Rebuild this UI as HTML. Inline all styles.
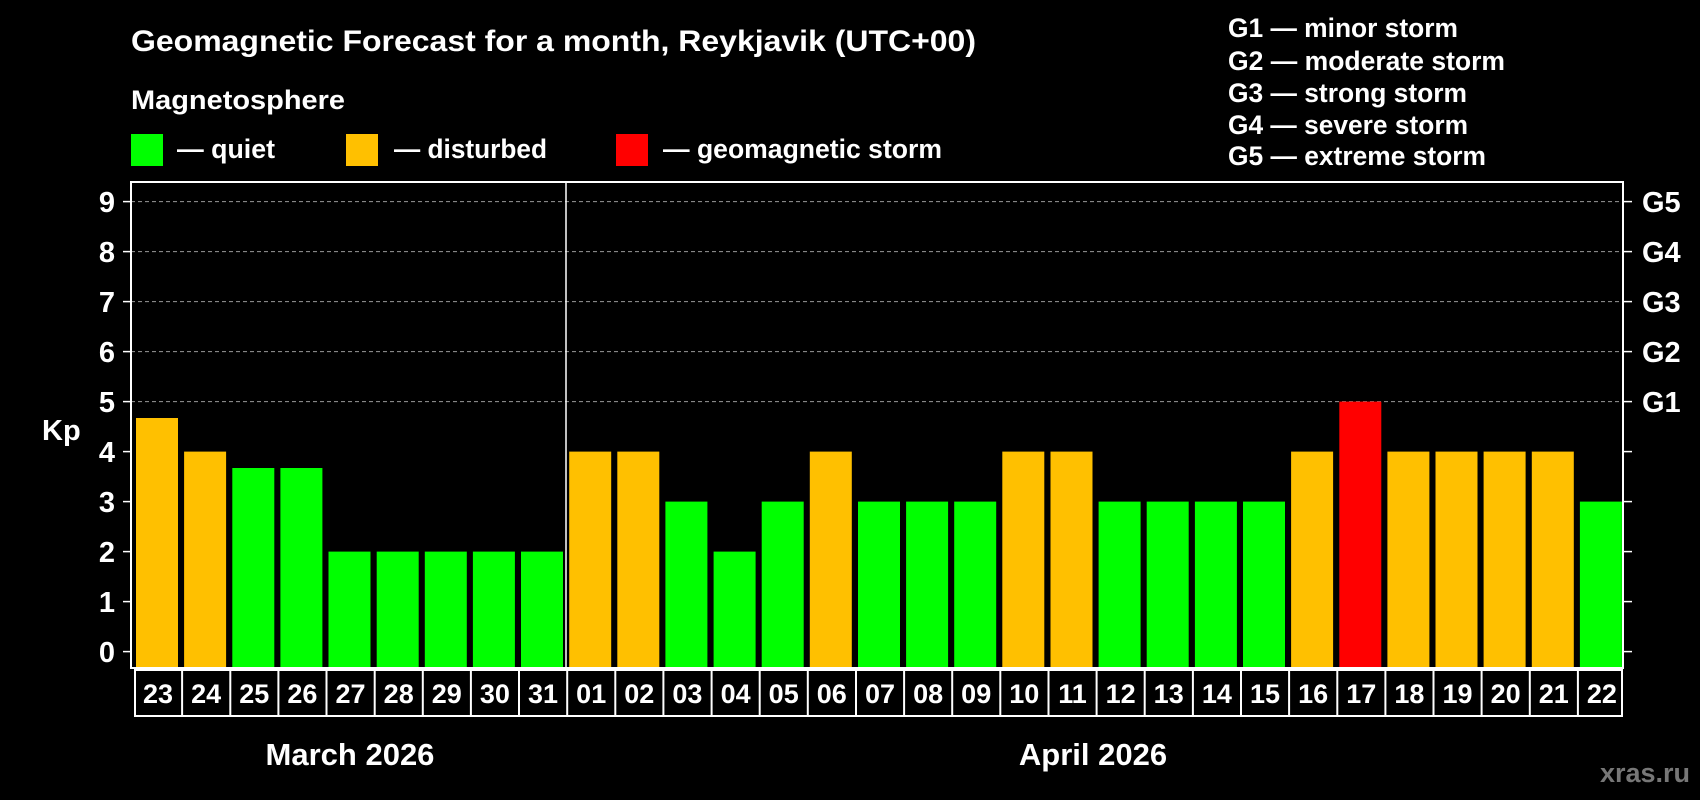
<!DOCTYPE html>
<html><head><meta charset="utf-8"><style>
html,body{margin:0;padding:0;background:#000;width:1700px;height:800px;overflow:hidden}
svg{display:block}
text{font-family:"Liberation Sans",Arial,sans-serif;font-weight:bold;fill:#fff}
</style></head><body>
<svg width="1700" height="800" viewBox="0 0 1700 800">
<rect width="1700" height="800" fill="#000"/>
<text x="131" y="51" font-size="30" textLength="845" lengthAdjust="spacingAndGlyphs">Geomagnetic Forecast for a month, Reykjavik (UTC+00)</text>
<text x="131" y="109" font-size="27" textLength="214" lengthAdjust="spacingAndGlyphs">Magnetosphere</text>
<rect x="131" y="134" width="32" height="32" fill="#00ff00"/>
<text x="177" y="158" font-size="27" textLength="98" lengthAdjust="spacingAndGlyphs">— quiet</text>
<rect x="346" y="134" width="32" height="32" fill="#ffc000"/>
<text x="394" y="158" font-size="27" textLength="153" lengthAdjust="spacingAndGlyphs">— disturbed</text>
<rect x="616" y="134" width="32" height="32" fill="#ff0000"/>
<text x="663" y="158" font-size="27" textLength="279" lengthAdjust="spacingAndGlyphs">— geomagnetic storm</text>
<g font-size="27">
<text x="1228" y="37" textLength="230" lengthAdjust="spacingAndGlyphs">G1 — minor storm</text>
<text x="1228" y="70" textLength="277" lengthAdjust="spacingAndGlyphs">G2 — moderate storm</text>
<text x="1228" y="102" textLength="239" lengthAdjust="spacingAndGlyphs">G3 — strong storm</text>
<text x="1228" y="134" textLength="240" lengthAdjust="spacingAndGlyphs">G4 — severe storm</text>
<text x="1228" y="165" textLength="258" lengthAdjust="spacingAndGlyphs">G5 — extreme storm</text>
</g>
<g stroke="#999" stroke-width="1" stroke-dasharray="4,3">
<line x1="131" y1="201.6" x2="1623" y2="201.6"/>
<line x1="131" y1="251.6" x2="1623" y2="251.6"/>
<line x1="131" y1="301.6" x2="1623" y2="301.6"/>
<line x1="131" y1="351.6" x2="1623" y2="351.6"/>
<line x1="131" y1="401.6" x2="1623" y2="401.6"/>
</g>
<g>
<rect x="136" y="418" width="42" height="250" fill="#ffc000"/>
<rect x="184.1" y="451.6" width="42" height="216.4" fill="#ffc000"/>
<rect x="232.3" y="468" width="42" height="200" fill="#00ff00"/>
<rect x="280.4" y="468" width="42" height="200" fill="#00ff00"/>
<rect x="328.5" y="551.6" width="42" height="116.4" fill="#00ff00"/>
<rect x="376.7" y="551.6" width="42" height="116.4" fill="#00ff00"/>
<rect x="424.8" y="551.6" width="42" height="116.4" fill="#00ff00"/>
<rect x="472.9" y="551.6" width="42" height="116.4" fill="#00ff00"/>
<rect x="521" y="551.6" width="42" height="116.4" fill="#00ff00"/>
<rect x="569.2" y="451.6" width="42" height="216.4" fill="#ffc000"/>
<rect x="617.3" y="451.6" width="42" height="216.4" fill="#ffc000"/>
<rect x="665.4" y="501.6" width="42" height="166.4" fill="#00ff00"/>
<rect x="713.6" y="551.6" width="42" height="116.4" fill="#00ff00"/>
<rect x="761.7" y="501.6" width="42" height="166.4" fill="#00ff00"/>
<rect x="809.8" y="451.6" width="42" height="216.4" fill="#ffc000"/>
<rect x="858" y="501.6" width="42" height="166.4" fill="#00ff00"/>
<rect x="906.1" y="501.6" width="42" height="166.4" fill="#00ff00"/>
<rect x="954.2" y="501.6" width="42" height="166.4" fill="#00ff00"/>
<rect x="1002.3" y="451.6" width="42" height="216.4" fill="#ffc000"/>
<rect x="1050.5" y="451.6" width="42" height="216.4" fill="#ffc000"/>
<rect x="1098.6" y="501.6" width="42" height="166.4" fill="#00ff00"/>
<rect x="1146.7" y="501.6" width="42" height="166.4" fill="#00ff00"/>
<rect x="1194.9" y="501.6" width="42" height="166.4" fill="#00ff00"/>
<rect x="1243" y="501.6" width="42" height="166.4" fill="#00ff00"/>
<rect x="1291.1" y="451.6" width="42" height="216.4" fill="#ffc000"/>
<rect x="1339.3" y="401.6" width="42" height="266.4" fill="#ff0000"/>
<rect x="1387.4" y="451.6" width="42" height="216.4" fill="#ffc000"/>
<rect x="1435.5" y="451.6" width="42" height="216.4" fill="#ffc000"/>
<rect x="1483.6" y="451.6" width="42" height="216.4" fill="#ffc000"/>
<rect x="1531.8" y="451.6" width="42" height="216.4" fill="#ffc000"/>
<rect x="1579.9" y="501.6" width="42" height="166.4" fill="#00ff00"/>
</g>
<rect x="131" y="182" width="1492" height="486" fill="none" stroke="#fff" stroke-width="2"/>
<line x1="566" y1="182" x2="566" y2="668" stroke="#fff" stroke-width="1.5"/>
<g stroke="#fff" stroke-width="1.5">
<line x1="123" y1="201.6" x2="131" y2="201.6"/><line x1="123" y1="251.6" x2="131" y2="251.6"/>
<line x1="123" y1="301.6" x2="131" y2="301.6"/><line x1="123" y1="351.6" x2="131" y2="351.6"/>
<line x1="123" y1="401.6" x2="131" y2="401.6"/><line x1="123" y1="451.6" x2="131" y2="451.6"/>
<line x1="123" y1="501.6" x2="131" y2="501.6"/><line x1="123" y1="551.6" x2="131" y2="551.6"/>
<line x1="123" y1="601.6" x2="131" y2="601.6"/><line x1="123" y1="651.6" x2="131" y2="651.6"/>
<line x1="1623" y1="201.6" x2="1632" y2="201.6"/><line x1="1623" y1="251.6" x2="1632" y2="251.6"/>
<line x1="1623" y1="301.6" x2="1632" y2="301.6"/><line x1="1623" y1="351.6" x2="1632" y2="351.6"/>
<line x1="1623" y1="401.6" x2="1632" y2="401.6"/><line x1="1623" y1="451.6" x2="1632" y2="451.6"/>
<line x1="1623" y1="501.6" x2="1632" y2="501.6"/><line x1="1623" y1="551.6" x2="1632" y2="551.6"/>
<line x1="1623" y1="601.6" x2="1632" y2="601.6"/><line x1="1623" y1="651.6" x2="1632" y2="651.6"/>
</g>
<g font-size="29" text-anchor="middle">
<text x="107" y="212">9</text><text x="107" y="262">8</text><text x="107" y="312">7</text>
<text x="107" y="362">6</text><text x="107" y="412">5</text><text x="107" y="462">4</text>
<text x="107" y="512">3</text><text x="107" y="562">2</text><text x="107" y="612">1</text>
<text x="107" y="662">0</text>
</g>
<text x="42" y="440" font-size="29">Kp</text>
<g font-size="29">
<text x="1642" y="212">G5</text><text x="1642" y="262">G4</text><text x="1642" y="312">G3</text>
<text x="1642" y="362">G2</text><text x="1642" y="412">G1</text>
</g>
<rect x="135" y="670" width="1487" height="46" fill="none" stroke="#fff" stroke-width="2"/>
<g stroke="#fff" stroke-width="2">
<line x1="182.1" y1="670" x2="182.1" y2="716"/><line x1="230.3" y1="670" x2="230.3" y2="716"/>
<line x1="278.4" y1="670" x2="278.4" y2="716"/><line x1="326.5" y1="670" x2="326.5" y2="716"/>
<line x1="374.7" y1="670" x2="374.7" y2="716"/><line x1="422.8" y1="670" x2="422.8" y2="716"/>
<line x1="470.9" y1="670" x2="470.9" y2="716"/><line x1="519" y1="670" x2="519" y2="716"/>
<line x1="567.2" y1="670" x2="567.2" y2="716"/><line x1="615.3" y1="670" x2="615.3" y2="716"/>
<line x1="663.4" y1="670" x2="663.4" y2="716"/><line x1="711.6" y1="670" x2="711.6" y2="716"/>
<line x1="759.7" y1="670" x2="759.7" y2="716"/><line x1="807.8" y1="670" x2="807.8" y2="716"/>
<line x1="856" y1="670" x2="856" y2="716"/><line x1="904.1" y1="670" x2="904.1" y2="716"/>
<line x1="952.2" y1="670" x2="952.2" y2="716"/><line x1="1000.3" y1="670" x2="1000.3" y2="716"/>
<line x1="1048.5" y1="670" x2="1048.5" y2="716"/><line x1="1096.6" y1="670" x2="1096.6" y2="716"/>
<line x1="1144.7" y1="670" x2="1144.7" y2="716"/><line x1="1192.9" y1="670" x2="1192.9" y2="716"/>
<line x1="1241" y1="670" x2="1241" y2="716"/><line x1="1289.1" y1="670" x2="1289.1" y2="716"/>
<line x1="1337.3" y1="670" x2="1337.3" y2="716"/><line x1="1385.4" y1="670" x2="1385.4" y2="716"/>
<line x1="1433.5" y1="670" x2="1433.5" y2="716"/><line x1="1481.6" y1="670" x2="1481.6" y2="716"/>
<line x1="1529.8" y1="670" x2="1529.8" y2="716"/><line x1="1577.9" y1="670" x2="1577.9" y2="716"/>
</g>
<g font-size="27" text-anchor="middle">
<text x="158" y="703">23</text><text x="206.1" y="703">24</text><text x="254.3" y="703">25</text>
<text x="302.4" y="703">26</text><text x="350.5" y="703">27</text><text x="398.7" y="703">28</text>
<text x="446.8" y="703">29</text><text x="494.9" y="703">30</text><text x="543" y="703">31</text>
<text x="591.2" y="703">01</text><text x="639.3" y="703">02</text><text x="687.4" y="703">03</text>
<text x="735.6" y="703">04</text><text x="783.7" y="703">05</text><text x="831.8" y="703">06</text>
<text x="880" y="703">07</text><text x="928.1" y="703">08</text><text x="976.2" y="703">09</text>
<text x="1024.3" y="703">10</text><text x="1072.5" y="703">11</text><text x="1120.6" y="703">12</text>
<text x="1168.7" y="703">13</text><text x="1216.9" y="703">14</text><text x="1265" y="703">15</text>
<text x="1313.1" y="703">16</text><text x="1361.3" y="703">17</text><text x="1409.4" y="703">18</text>
<text x="1457.5" y="703">19</text><text x="1505.6" y="703">20</text><text x="1553.8" y="703">21</text>
<text x="1601.9" y="703">22</text>
</g>
<text x="350" y="765" font-size="31" text-anchor="middle">March 2026</text>
<text x="1093" y="765" font-size="31" text-anchor="middle">April 2026</text>
<text x="1690" y="782" font-size="27" text-anchor="end" style="fill:#777">xras.ru</text>
</svg>
</body></html>
